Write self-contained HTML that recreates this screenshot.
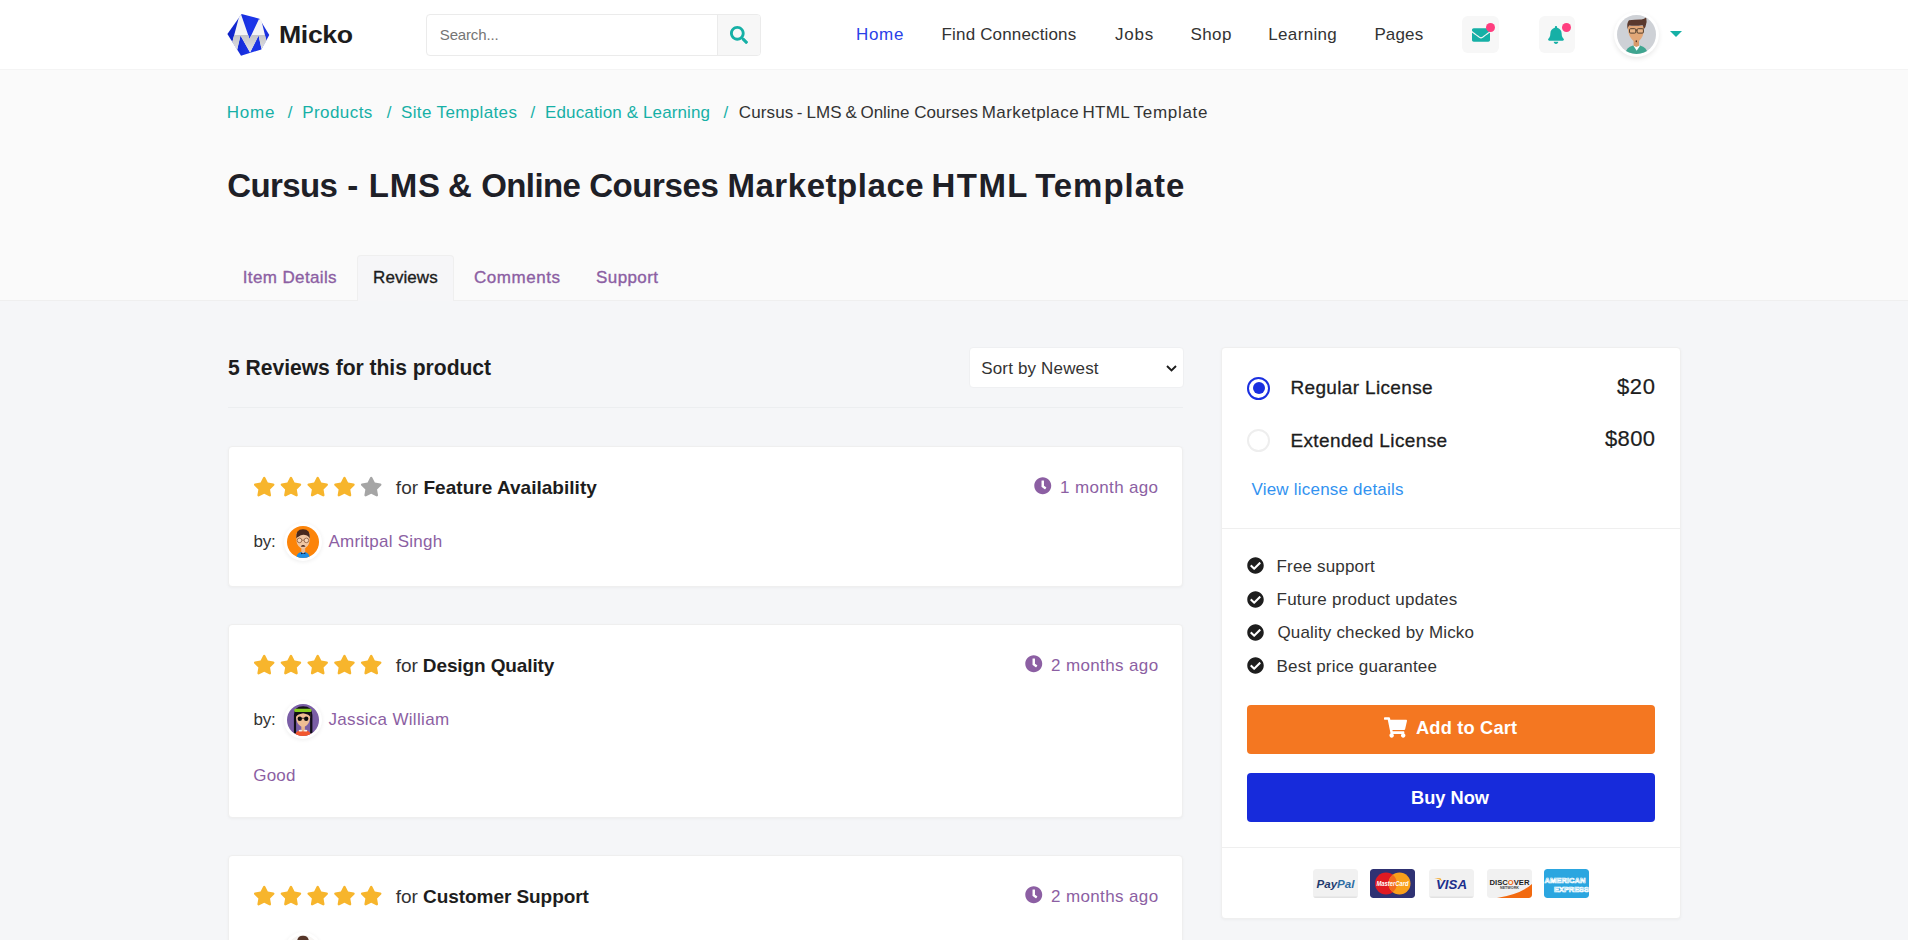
<!DOCTYPE html>
<html lang="en">
<head>
<meta charset="utf-8">
<title>Cursus - LMS &amp; Online Courses Marketplace HTML Template | Micko</title>
<style>
*{box-sizing:border-box;margin:0;padding:0}
html,body{width:1908px;height:940px;overflow:hidden}
body{position:relative;background:#f5f6f8;font-family:"Liberation Sans",Arial,sans-serif;color:#333;font-size:17px;line-height:20px}
a{text-decoration:none;color:inherit}
ul{list-style:none}
.abs,.t{position:absolute;white-space:nowrap}
.t{line-height:20px;height:20px}
svg{display:block}

/* ---------- header ---------- */
header{position:absolute;left:0;top:0;width:1908px;height:70px;background:#fff;border-bottom:1px solid #f4f4f4}
.logo{position:absolute;left:224px;top:10px;width:50px;height:50px}
.brand{left:280px;top:25px;font-size:23px;font-weight:700;color:#1d1d1d;transform:scaleX(1.16);transform-origin:0 50%}
.search{position:absolute;left:426px;top:14px;width:335px;height:42px;border:1px solid #ebebeb;border-radius:4px;background:#fff;overflow:hidden}
.search .ph{left:14px;top:10px;font-size:15px;color:#757575}
.search .btn{position:absolute;right:0;top:0;width:43px;height:40px;background:#f7f7f7;border-left:1px solid #ebebeb}
.search .btn svg{position:absolute;left:12px;top:11px}
nav .t{top:24px;font-size:17px;color:#333}
nav .t.active{color:#2a41e8}
.ibtn{position:absolute;top:16px;width:37px;height:37px;border-radius:6px;background:#f7f7f7}
.ibtn i{position:absolute;width:9px;height:9px;border-radius:50%;background:#ff3e7f}
.avatar{position:absolute;left:1614px;top:12px;width:45px;height:45px;border-radius:50%;background:#fff;box-shadow:0 2px 5px rgba(0,0,0,.09)}
.avatar svg{position:absolute;left:3px;top:3px}
.caret{position:absolute;left:1670px;top:31px;width:0;height:0;border-left:6px solid transparent;border-right:6px solid transparent;border-top:6px solid #16b0a6}

/* ---------- title band ---------- */
.band{position:absolute;left:0;top:70px;width:1908px;height:231px;background:#fafafa;border-bottom:1px solid #efefef}
.crumbs .t{top:102px;font-size:17px;color:#16b0a6}
.crumbs .t.sep{color:#16b0a6}
.crumbs .t.cur{color:#333}
h1{font-size:33px;font-weight:700;color:#1e2027}
h1 .t{left:228px;top:176px;font-size:33px}
.tabs .t{top:267px;font-size:17px;color:#8c5fa3;-webkit-text-stroke:.35px #8c5fa3}
.tabs .t.on{color:#1d1d1d;-webkit-text-stroke:.35px #1d1d1d}
.tabon{position:absolute;left:357px;top:255px;width:97px;height:46px;background:#f6f6f8;border:1px solid #efefef;border-bottom:0;border-radius:4px 4px 0 0}

/* ---------- reviews ---------- */
h2.t{left:228px;top:354px;height:28px;line-height:28px;font-size:22px;font-weight:700;color:#1d1d1d;transform:scaleX(.96);transform-origin:0 50%}
.select{position:absolute;left:969px;top:347px;width:215px;height:41px;background:#fff;border:1px solid #eff0f2;border-radius:4px}
.select .t{left:11px;top:9px;font-size:17px;color:#333}
.select svg{position:absolute;left:196px;top:17px}
.hr{position:absolute;left:228px;top:407px;width:955px;height:1px;background:#eceef0}
.card{position:absolute;left:228px;width:955px;background:#fff;border:1px solid #efefef;border-radius:4px;box-shadow:0 1px 3px rgba(0,0,0,.04)}
.stars{position:absolute;left:25px;top:29px;width:130px;height:22px}
.card .for{left:167px;top:29px;font-size:19px;color:#333}
.card .for b{color:#1d1d1d}
.card .time{top:29px;font-size:17px;color:#8c5fa3}
.card .clock{position:absolute;top:30px}
.card .by{left:25px;top:84px;font-size:17px;color:#333}
.card .av{position:absolute;left:55px;top:76px;width:38px;height:38px;border-radius:50%;background:#fff;box-shadow:0 1px 4px rgba(0,0,0,.07)}
.card .av svg{position:absolute;left:3px;top:3px}
.card .name{left:99px;top:84px;font-size:17px;color:#8c5fa3}
.card .body{left:25px;top:139px;font-size:17px;color:#8c5fa3}

/* ---------- sidebar ---------- */
aside{position:absolute;left:1221px;top:347px;width:460px;height:572px;background:#fff;border:1px solid #efefef;border-radius:4px;box-shadow:0 1px 3px rgba(0,0,0,.04)}
.radio{position:absolute;left:25px;width:23px;height:23px;border-radius:50%;background:#fff;border:2px solid #eee}
.radio.on{border-color:#1a2fe0}
.radio.on:after{content:"";position:absolute;left:3.5px;top:3.5px;width:12px;height:12px;border-radius:50%;background:#1a2fe0}
.lic{left:69px;font-size:19px;color:#1d1d1d;-webkit-text-stroke:.3px #1d1d1d}
.price{font-size:22px;color:#1d1d1d;-webkit-text-stroke:.2px #1d1d1d}
.vld{left:30px;top:131px;font-size:17px;color:#3292f0}
.line{position:absolute;left:0;width:458px;height:1px;background:#efefef}
.feat li{position:absolute;left:25px;height:20px}
.feat svg{position:absolute;left:0;top:1px}
.feat .t{left:31px;top:0;font-size:17px;color:#333}
.bt{position:absolute;left:25px;width:408px;height:49px;border-radius:4px;color:#fff}
.bt.cart{top:357px;background:#f47721}
.bt.buy{top:425px;background:#172bdb}
.bt .t{top:15px;font-size:19px;font-weight:700;color:#fff;transform:scaleX(.96);transform-origin:0 50%}
.bt svg{position:absolute;left:137px;top:12.300px}
.pay{position:absolute;top:521px;width:45px;height:29px;border-radius:3px;overflow:hidden}
</style>
<style>
#c-brand{left:278.55px;top:25.00px;letter-spacing:-0.327px}
#c-ph{left:12.80px;top:10.00px;letter-spacing:-0.152px}
#c-n1{left:855.92px;top:25.00px;letter-spacing:0.702px}
#c-n2{left:941.56px;top:25.00px;letter-spacing:0.157px}
#c-n3{left:1115.05px;top:25.00px;letter-spacing:0.782px}
#c-n4{left:1190.40px;top:25.00px;letter-spacing:0.419px}
#c-n5{left:1268.29px;top:25.00px;letter-spacing:0.332px}
#c-n6{left:1374.40px;top:25.00px;letter-spacing:0.133px}
#c-b1{left:226.66px;top:103.00px;letter-spacing:0.801px}
#c-s1{left:287.86px;top:103.00px;letter-spacing:0.000px}
#c-b2{left:302.26px;top:103.00px;letter-spacing:0.427px}
#c-s2{left:386.85px;top:103.00px;letter-spacing:0.000px}
#c-b3{left:401.02px;top:103.00px;letter-spacing:0.360px}
#c-s3{left:530.57px;top:103.00px;letter-spacing:0.000px}
#c-b4{left:545.06px;top:103.00px;letter-spacing:0.127px}
#c-s4{left:723.57px;top:103.00px;letter-spacing:0.000px}
#c-w1{left:227.35px;top:176.00px;letter-spacing:-0.644px}
#c-w2{left:347.26px;top:176.00px;letter-spacing:0.000px}
#c-w3{left:368.80px;top:176.00px;letter-spacing:0.839px}
#c-w4{left:447.93px;top:176.00px;letter-spacing:0.000px}
#c-w5{left:481.14px;top:176.00px;letter-spacing:-0.576px}
#c-w6{left:589.14px;top:176.00px;letter-spacing:-0.395px}
#c-w7{left:727.45px;top:176.00px;letter-spacing:0.544px}
#c-w8{left:931.54px;top:176.00px;letter-spacing:1.446px}
#c-w9{left:1035.14px;top:176.00px;letter-spacing:0.958px}
#c-t1{left:242.76px;top:268.00px;letter-spacing:0.373px}
#c-t2{left:373.06px;top:268.00px;letter-spacing:0.068px}
#c-t3{left:474.02px;top:268.00px;letter-spacing:0.539px}
#c-t4{left:596.05px;top:268.00px;letter-spacing:0.398px}
#c-h2{left:227.60px;top:354.00px;letter-spacing:-0.039px}
#c-sel{left:11.20px;top:11.00px;letter-spacing:0.165px}
#c-f1{left:166.87px;top:31.00px;letter-spacing:0.031px}
#c-f2{left:166.87px;top:31.00px;letter-spacing:-0.115px}
#c-f3{left:166.87px;top:31.00px;letter-spacing:-0.063px}
#c-tm1{left:831.07px;top:31.00px;letter-spacing:0.350px}
#c-tm2{left:821.99px;top:31.00px;letter-spacing:0.376px}
#c-tm3{left:821.99px;top:31.00px;letter-spacing:0.376px}
#c-by1{left:24.40px;top:85.00px;letter-spacing:-0.116px}
#c-by2{left:24.40px;top:85.00px;letter-spacing:-0.116px}
#c-by3{left:25.50px;top:85.00px;letter-spacing:0.000px}
#c-nm1{left:99.46px;top:85.00px;letter-spacing:0.243px}
#c-nm2{left:99.52px;top:85.00px;letter-spacing:0.312px}
#c-nm3{left:99.80px;top:85.00px;letter-spacing:0.000px}
#c-bd2{left:24.30px;top:141.00px;letter-spacing:0.162px}
#c-l1{left:68.46px;top:30.00px;letter-spacing:0.347px}
#c-l2{left:68.46px;top:83.00px;letter-spacing:0.373px}
#c-p1{left:394.90px;top:29.00px;letter-spacing:0.721px}
#c-p2{left:382.91px;top:81.00px;letter-spacing:0.410px}
#c-vld{left:29.48px;top:132.00px;letter-spacing:0.210px}
#c-ft1{left:29.56px;top:1.00px;letter-spacing:0.165px}
#c-ft2{left:29.56px;top:0.00px;letter-spacing:0.230px}
#c-ft3{left:30.46px;top:0.00px;letter-spacing:0.162px}
#c-ft4{left:29.56px;top:1.00px;letter-spacing:0.183px}
#c-cart{left:169.00px;top:13.00px;letter-spacing:0.186px}
#c-buy{left:164.20px;top:15.00px;letter-spacing:-0.000px}
#c-v1{left:738.87px;top:103.00px;letter-spacing:0.117px}
#c-v2{left:796.84px;top:103.00px;letter-spacing:0.000px}
#c-v3{left:806.41px;top:103.00px;letter-spacing:0.154px}
#c-v4{left:845.49px;top:103.00px;letter-spacing:0.000px}
#c-v5{left:860.50px;top:103.00px;letter-spacing:-0.030px}
#c-v6{left:914.13px;top:103.00px;letter-spacing:0.078px}
#c-v7{left:981.71px;top:103.00px;letter-spacing:0.429px}
#c-v8{left:1082.41px;top:103.00px;letter-spacing:0.314px}
#c-v9{left:1133.59px;top:103.00px;letter-spacing:0.695px}
</style>
</head>
<body>

<header>
  <a class="logo" href="#">
    <svg width="50" height="50" viewBox="0 0 940 940">
      <defs>
        <linearGradient id="lgb" x1="0" y1="0" x2="1" y2="0"><stop offset="0" stop-color="#0d20c4"/><stop offset=".55" stop-color="#1c36ea"/><stop offset="1" stop-color="#1a30dc"/></linearGradient>
        <linearGradient id="lgg" x1="0" y1="470" x2="0" y2="820" gradientUnits="userSpaceOnUse"><stop offset="0" stop-color="#c4c4c7"/><stop offset="1" stop-color="#e6e6e8"/></linearGradient>
        <clipPath id="cpl"><rect x="0" y="470" width="940" height="470"/></clipPath>
      </defs>
      <polygon points="330,74 666,164 851,470 701,741 320,862 64,450" fill="url(#lgb)"/>
      <polygon points="320,78 480,545 655,172 700,185 795,575 705,735 650,480 490,800 310,480 247,745 158,598 277,150" fill="#f4f4f6"/>
      <polygon clip-path="url(#cpl)" points="320,78 480,545 655,172 700,185 795,575 705,735 650,480 490,800 310,480 247,745 158,598 277,150" fill="url(#lgg)"/>
    </svg>
  </a>
  <a class="t brand" id="c-brand" href="#">Micko</a>

  <div class="search">
    <span class="t ph" id="c-ph">Search...</span>
    <span class="btn">
      <svg width="18" height="18" viewBox="0 0 512 512"><path fill="#16b0a6" d="M505 442.7L405.300 343c-4.500-4.500-10.600-7-17-7H372c27.600-35.300 44-79.700 44-128C416 93.100 322.900 0 208 0S0 93.100 0 208s93.100 208 208 208c48.300 0 92.700-16.400 128-44v16.300c0 6.400 2.500 12.500 7 17l99.700 99.700c9.400 9.400 24.600 9.400 33.900 0l28.300-28.300c9.400-9.400 9.400-24.600.1-34zM208 336c-70.700 0-128-57.200-128-128 0-70.700 57.200-128 128-128 70.700 0 128 57.200 128 128 0 70.700-57.200 128-128 128z"/></svg>
    </span>
  </div>

  <nav>
    <a class="t active" id="c-n1" href="#">Home</a>
    <a class="t" id="c-n2" href="#">Find Connections</a>
    <a class="t" id="c-n3" href="#">Jobs</a>
    <a class="t" id="c-n4" href="#">Shop</a>
    <a class="t" id="c-n5" href="#">Learning</a>
    <a class="t" id="c-n6" href="#">Pages</a>
  </nav>

  <a class="ibtn" style="left:1462px" href="#">
    <svg style="position:absolute;left:10px;top:10px" width="18" height="18" viewBox="0 0 512 512"><path fill="#16b0a6" d="M502.300 190.800c3.900-3.100 9.700-.2 9.700 4.700V400c0 26.500-21.500 48-48 48H48c-26.500 0-48-21.500-48-48V195.600c0-5 5.700-7.800 9.700-4.700 22.400 17.400 52.100 39.500 154.100 113.600 21.100 15.400 56.700 47.800 92.200 47.600 35.700.3 72-32.800 92.300-47.600 102-74.100 131.600-96.300 154-113.700zM256 320c23.200.4 56.600-29.200 73.400-41.400 132.700-96.300 142.800-104.700 173.400-128.700 5.800-4.500 9.200-11.500 9.200-18.900v-19c0-26.500-21.500-48-48-48H48C21.500 64 0 85.500 0 112v19c0 7.400 3.400 14.300 9.200 18.900 30.600 23.900 40.700 32.400 173.400 128.700 16.800 12.200 50.200 41.800 73.400 41.400z"/></svg>
    <i style="left:24px;top:6.500px"></i>
  </a>
  <a class="ibtn" style="left:1539px;width:36px" href="#">
    <svg style="position:absolute;left:9px;top:10px" width="16" height="18" viewBox="0 0 448 512"><path fill="#16b0a6" d="M224 512c35.320 0 63.970-28.650 63.970-64H160.030c0 35.350 28.650 64 63.970 64zm215.390-149.710c-19.320-20.760-55.470-51.990-55.470-154.290 0-77.700-54.480-139.900-127.940-155.160V32c0-17.670-14.320-32-31.980-32s-31.980 14.330-31.980 32v20.840C118.560 68.100 64.080 130.300 64.080 208c0 102.300-36.150 133.530-55.470 154.290-6 6.450-8.660 14.160-8.610 21.710.11 16.400 12.980 32 32.100 32h383.800c19.120 0 32-15.600 32.100-32 .05-7.550-2.610-15.270-8.610-21.710z"/></svg>
    <i style="left:22.5px;top:6.500px"></i>
  </a>
  <a class="avatar" href="#">
    <svg width="39" height="39" viewBox="0 0 39 39">
      <defs><clipPath id="cpa"><circle cx="19.500" cy="19.500" r="19.500"/></clipPath></defs>
      <g clip-path="url(#cpa)">
        <rect width="39" height="39" fill="#ced1d6"/>
        <path d="M8.500 39q.3-6.500 7.500-8.400h7q7.200 1.900 7.500 8.400z" fill="#3fa590"/>
        <path d="M16.300 30.600l3.400 5.200 3.500-5.200z" fill="#fff"/>
        <path d="M16.600 25h5.400v5.800l-2.600 1.300-2.800-1.300z" fill="#d99a6a"/>
        <path d="M10.900 11q-.2 8.500 3.300 12.500q3.200 3.800 5 3.800t5-3.800q3.200-4 2.800-12.500z" fill="#e2a777"/>
        <path d="M10.500 14.500q-.9-7 1.500-9.200q6.500-.9 12.500-.8q2.800-.4 4.700-2.300q1.300 5-.8 9.800l-1.800 2.400q.2-3-1-4.200q-7 1-13.500.3q-1.300 1.300-1.600 4z" fill="#5a392d"/>
        <rect x="12.500" y="13.700" width="6.300" height="4.400" rx="1.100" fill="#e9b487" stroke="#54402f" stroke-width="1"/>
        <rect x="20.100" y="13.700" width="6.300" height="4.400" rx="1.100" fill="#e9b487" stroke="#54402f" stroke-width="1"/>
        <path d="M18.800 15.200h1.300" stroke="#54402f" stroke-width="1"/>
        <ellipse cx="19.300" cy="26.200" rx=".7" ry="1" fill="#4a2d22"/>
      </g>
    </svg>
  </a>
  <span class="caret"></span>
</header>

<section class="band"></section>
<div class="crumbs">
  <a class="t" id="c-b1" href="#">Home</a>
  <span class="t sep" id="c-s1">/</span>
  <a class="t" id="c-b2" href="#">Products</a>
  <span class="t sep" id="c-s2">/</span>
  <a class="t" id="c-b3" href="#">Site Templates</a>
  <span class="t sep" id="c-s3">/</span>
  <a class="t" id="c-b4" href="#">Education &amp; Learning</a>
  <span class="t sep" id="c-s4">/</span>
  <span class="cur"><span class="t cur" id="c-v1">Cursus</span> <span class="t cur" id="c-v2">-</span> <span class="t cur" id="c-v3">LMS</span> <span class="t cur" id="c-v4">&amp;</span> <span class="t cur" id="c-v5">Online</span> <span class="t cur" id="c-v6">Courses</span> <span class="t cur" id="c-v7">Marketplace</span> <span class="t cur" id="c-v8">HTML</span> <span class="t cur" id="c-v9">Template</span></span>
</div>
<h1><span class="t" id="c-w1">Cursus</span> <span class="t" id="c-w2">-</span> <span class="t" id="c-w3">LMS</span> <span class="t" id="c-w4">&amp;</span> <span class="t" id="c-w5">Online</span> <span class="t" id="c-w6">Courses</span> <span class="t" id="c-w7">Marketplace</span> <span class="t" id="c-w8">HTML</span> <span class="t" id="c-w9">Template</span></h1>
<div class="tabs">
  <span class="tabon"></span>
  <a class="t" id="c-t1" href="#">Item Details</a>
  <a class="t on" id="c-t2" href="#">Reviews</a>
  <a class="t" id="c-t3" href="#">Comments</a>
  <a class="t" id="c-t4" href="#">Support</a>
</div>

<main>
  <h2 class="t" id="c-h2">5 Reviews for this product</h2>
  <div class="select">
    <span class="t" id="c-sel">Sort by Newest</span>
    <svg width="11" height="7" viewBox="0 0 11 7"><path d="M1 1l4.500 4.500L10 1" fill="none" stroke="#1d1d1d" stroke-width="1.900"/></svg>
  </div>
  <div class="hr"></div>

  <article class="card" style="top:446px;height:141px">
    <svg class="stars" width="130" height="22" viewBox="0 0 130 22"><path transform="translate(-0.85 0.8) scale(0.0384)" fill="#f7b52c" d="M259.3 17.8L194 150.2 47.9 171.5c-26.200 3.800-36.700 36.100-17.700 54.600l105.700 103-25 145.500c-4.500 26.300 23.200 46 46.400 33.700L288 439.600l130.700 68.700c23.200 12.200 50.900-7.400 46.400-33.700l-25-145.500 105.700-103c19-18.500 8.500-50.800-17.700-54.600L382 150.200 316.700 17.800c-11.700-23.600-45.600-23.900-57.400 0z"/><path transform="translate(25.90 0.8) scale(0.0384)" fill="#f7b52c" d="M259.3 17.8L194 150.2 47.9 171.5c-26.200 3.800-36.700 36.100-17.700 54.600l105.700 103-25 145.500c-4.500 26.300 23.200 46 46.400 33.700L288 439.600l130.700 68.700c23.200 12.200 50.900-7.400 46.400-33.700l-25-145.500 105.700-103c19-18.500 8.500-50.800-17.700-54.600L382 150.200 316.700 17.800c-11.700-23.600-45.600-23.900-57.400 0z"/><path transform="translate(52.65 0.8) scale(0.0384)" fill="#f7b52c" d="M259.3 17.8L194 150.2 47.9 171.5c-26.200 3.800-36.700 36.100-17.700 54.600l105.700 103-25 145.500c-4.500 26.300 23.200 46 46.400 33.700L288 439.600l130.700 68.700c23.200 12.200 50.900-7.400 46.400-33.700l-25-145.500 105.700-103c19-18.500 8.500-50.800-17.700-54.600L382 150.200 316.700 17.800c-11.700-23.600-45.600-23.900-57.400 0z"/><path transform="translate(79.40 0.8) scale(0.0384)" fill="#f7b52c" d="M259.3 17.8L194 150.2 47.9 171.5c-26.200 3.800-36.700 36.100-17.700 54.600l105.700 103-25 145.500c-4.500 26.300 23.200 46 46.400 33.700L288 439.600l130.700 68.700c23.200 12.200 50.900-7.400 46.400-33.700l-25-145.500 105.700-103c19-18.500 8.500-50.800-17.700-54.600L382 150.200 316.700 17.800c-11.700-23.600-45.600-23.900-57.400 0z"/><path transform="translate(106.15 0.8) scale(0.0384)" fill="#a5a5a5" d="M259.3 17.8L194 150.2 47.9 171.5c-26.200 3.800-36.700 36.100-17.700 54.600l105.700 103-25 145.500c-4.500 26.300 23.200 46 46.400 33.700L288 439.600l130.700 68.700c23.200 12.200 50.900-7.400 46.400-33.700l-25-145.500 105.700-103c19-18.500 8.500-50.800-17.700-54.600L382 150.200 316.700 17.800c-11.700-23.600-45.600-23.900-57.400 0z"/></svg>
    <span class="t for" id="c-f1">for <b>Feature Availability</b></span>
    <svg class="clock" style="left:805px" width="17.500" height="17.500" viewBox="0 0 512 512"><path fill="#8c5fa3" d="M256 8C119 8 8 119 8 256s111 248 248 248 248-111 248-248S393 8 256 8zm57.100 350.100L224.900 294c-3.100-2.300-4.900-5.900-4.900-9.700V116c0-6.600 5.400-12 12-12h48c6.600 0 12 5.400 12 12v137.700l63.500 46.200c5.400 3.900 6.500 11.400 2.600 16.800l-28.200 38.800c-3.900 5.300-11.400 6.500-16.800 2.600z"/></svg>
    <span class="t time" id="c-tm1">1 month ago</span>
    <span class="t by" id="c-by1">by:</span>
    <a class="av" href="#"><svg width="32" height="32" viewBox="0 0 32 32"><defs><clipPath id="cp1"><circle cx="16" cy="16" r="16"/></clipPath></defs><g clip-path="url(#cp1)"><rect width="32" height="32" fill="#fc8409"/><path d="M9.400 32q.2-5.400 4.800-6.100h3.600q4.600.7 4.800 6.100z" fill="#1f8fe6"/><path d="M14.300 21h3.900v5.200l-1.900 1-2-1z" fill="#e8b995"/><path d="M9.400 7v5q-.1 5.500 2 8q2.300 2.700 4.600 2.700t4.600-2.700q2.100-2.500 2-8V7z" fill="#efc6a3"/><path d="M9.200 12.500q-.9-9.300 6.800-9.300t6.800 9.300q-1-2.400-2.800-3.100q-5-2-8.600 1.300q-1.600.5-2.200 1.800z" fill="#48291f"/><circle cx="12.500" cy="14.400" r="2.300" fill="#f6d6bb" stroke="#86573a" stroke-width=".8"/><circle cx="19.400" cy="14.400" r="2.300" fill="#f6d6bb" stroke="#86573a" stroke-width=".8"/><path d="M14.800 14.200h2.300" stroke="#86573a" stroke-width=".7"/><path d="M13.700 20.400q2.400-2.600 4.800 0q-2.400.7-4.800 0z" fill="#4a2a20"/><path d="M14 26.400l2.200.9 2.100-.9v1.900l-2.100-.7-2.200.7z" fill="#17213f"/></g></svg></a>
    <a class="t name" id="c-nm1" href="#">Amritpal Singh</a>
  </article>
  <article class="card" style="top:624px;height:194px">
    <svg class="stars" width="130" height="22" viewBox="0 0 130 22"><path transform="translate(-0.85 0.8) scale(0.0384)" fill="#f7b52c" d="M259.3 17.8L194 150.2 47.9 171.5c-26.200 3.800-36.700 36.100-17.700 54.600l105.700 103-25 145.500c-4.500 26.300 23.200 46 46.400 33.700L288 439.600l130.700 68.700c23.200 12.200 50.900-7.400 46.400-33.700l-25-145.500 105.700-103c19-18.500 8.500-50.800-17.700-54.600L382 150.200 316.700 17.800c-11.700-23.600-45.600-23.900-57.400 0z"/><path transform="translate(25.90 0.8) scale(0.0384)" fill="#f7b52c" d="M259.3 17.8L194 150.2 47.9 171.5c-26.200 3.800-36.700 36.100-17.700 54.600l105.700 103-25 145.500c-4.500 26.300 23.200 46 46.400 33.700L288 439.600l130.700 68.700c23.200 12.200 50.900-7.400 46.400-33.700l-25-145.500 105.700-103c19-18.500 8.500-50.800-17.700-54.600L382 150.200 316.700 17.800c-11.700-23.600-45.600-23.900-57.400 0z"/><path transform="translate(52.65 0.8) scale(0.0384)" fill="#f7b52c" d="M259.3 17.8L194 150.2 47.9 171.5c-26.200 3.800-36.700 36.100-17.700 54.600l105.700 103-25 145.500c-4.500 26.300 23.200 46 46.400 33.700L288 439.600l130.700 68.700c23.200 12.200 50.900-7.400 46.400-33.700l-25-145.500 105.700-103c19-18.500 8.500-50.800-17.700-54.600L382 150.200 316.700 17.800c-11.700-23.600-45.600-23.900-57.400 0z"/><path transform="translate(79.40 0.8) scale(0.0384)" fill="#f7b52c" d="M259.3 17.8L194 150.2 47.9 171.5c-26.200 3.800-36.700 36.100-17.700 54.600l105.700 103-25 145.500c-4.500 26.300 23.200 46 46.400 33.700L288 439.600l130.700 68.700c23.200 12.200 50.900-7.400 46.400-33.700l-25-145.500 105.700-103c19-18.500 8.500-50.800-17.700-54.600L382 150.200 316.700 17.800c-11.700-23.600-45.600-23.900-57.400 0z"/><path transform="translate(106.15 0.8) scale(0.0384)" fill="#f7b52c" d="M259.3 17.8L194 150.2 47.9 171.5c-26.200 3.800-36.700 36.100-17.700 54.600l105.700 103-25 145.500c-4.500 26.300 23.200 46 46.400 33.700L288 439.600l130.700 68.700c23.200 12.200 50.900-7.400 46.400-33.700l-25-145.500 105.700-103c19-18.500 8.500-50.800-17.700-54.600L382 150.200 316.700 17.800c-11.700-23.600-45.600-23.900-57.400 0z"/></svg>
    <span class="t for" id="c-f2">for <b>Design Quality</b></span>
    <svg class="clock" style="left:796px" width="17.500" height="17.500" viewBox="0 0 512 512"><path fill="#8c5fa3" d="M256 8C119 8 8 119 8 256s111 248 248 248 248-111 248-248S393 8 256 8zm57.100 350.100L224.900 294c-3.100-2.300-4.900-5.900-4.900-9.700V116c0-6.600 5.400-12 12-12h48c6.600 0 12 5.400 12 12v137.700l63.500 46.200c5.400 3.900 6.500 11.400 2.600 16.800l-28.200 38.800c-3.900 5.300-11.400 6.500-16.800 2.600z"/></svg>
    <span class="t time" id="c-tm2">2 months ago</span>
    <span class="t by" id="c-by2">by:</span>
    <a class="av" href="#"><svg width="32" height="32" viewBox="0 0 32 32"><defs><clipPath id="cp2"><circle cx="16" cy="16" r="16"/></clipPath></defs><g clip-path="url(#cp2)"><rect width="32" height="32" fill="#7a5ea6"/><path d="M6.900 29.500V11q0-8.800 9.200-8.800t9.300 8.800v18.500h-2.300V12H9.100v17.500z" fill="#120f18"/><path d="M8 32q.2-4.800 5.200-5.500h5.600q5 .7 5.200 5.500z" fill="#f2572e"/><path d="M14.300 21h3.600v5.600l-1.800 1.200-1.800-1.200z" fill="#eab48d"/><path d="M9 9q-.4 7.500 2.200 11q2.600 3.300 4.900 3.300t4.900-3.300q2.600-3.500 2.200-11z" fill="#efbd94"/><path d="M8.800 13.500V8h14.600v5.500q-.8-3.300-7.300-4.300q-6.500 1-7.300 4.300z" fill="#120f18"/><rect x="7.300" y="4.800" width="17.200" height="3.100" rx="1.200" fill="#86cc1e"/><circle cx="12.800" cy="14.700" r="2.200" fill="#0d0d10"/><circle cx="19.200" cy="14.700" r="2.200" fill="#0d0d10"/><path d="M14.800 14.300h2.400" stroke="#0d0d10" stroke-width=".7"/><ellipse cx="13.400" cy="26.700" rx="1.700" ry=".9" fill="#f3efe9"/><ellipse cx="18.600" cy="26.700" rx="1.700" ry=".9" fill="#f3efe9"/></g></svg></a>
    <a class="t name" id="c-nm2" href="#">Jassica William</a>
    <p class="t body" id="c-bd2">Good</p>
  </article>
  <article class="card" style="top:855px;height:140px">
    <svg class="stars" width="130" height="22" viewBox="0 0 130 22"><path transform="translate(-0.85 0.8) scale(0.0384)" fill="#f7b52c" d="M259.3 17.8L194 150.2 47.9 171.5c-26.200 3.800-36.700 36.100-17.700 54.600l105.700 103-25 145.500c-4.500 26.300 23.200 46 46.400 33.700L288 439.600l130.700 68.700c23.200 12.200 50.900-7.400 46.400-33.700l-25-145.500 105.700-103c19-18.500 8.500-50.800-17.700-54.600L382 150.200 316.700 17.800c-11.700-23.600-45.600-23.900-57.400 0z"/><path transform="translate(25.90 0.8) scale(0.0384)" fill="#f7b52c" d="M259.3 17.8L194 150.2 47.9 171.5c-26.200 3.800-36.700 36.100-17.700 54.600l105.700 103-25 145.500c-4.500 26.300 23.200 46 46.400 33.700L288 439.600l130.700 68.700c23.200 12.200 50.900-7.400 46.400-33.700l-25-145.500 105.700-103c19-18.500 8.500-50.800-17.700-54.600L382 150.200 316.700 17.800c-11.700-23.600-45.600-23.900-57.400 0z"/><path transform="translate(52.65 0.8) scale(0.0384)" fill="#f7b52c" d="M259.3 17.8L194 150.2 47.9 171.5c-26.200 3.800-36.700 36.100-17.700 54.600l105.700 103-25 145.500c-4.500 26.300 23.200 46 46.400 33.700L288 439.600l130.700 68.700c23.200 12.200 50.900-7.400 46.400-33.700l-25-145.500 105.700-103c19-18.500 8.500-50.800-17.700-54.600L382 150.200 316.700 17.800c-11.700-23.600-45.600-23.900-57.400 0z"/><path transform="translate(79.40 0.8) scale(0.0384)" fill="#f7b52c" d="M259.3 17.8L194 150.2 47.9 171.5c-26.200 3.800-36.700 36.100-17.700 54.600l105.700 103-25 145.500c-4.500 26.300 23.200 46 46.400 33.700L288 439.600l130.700 68.700c23.200 12.200 50.900-7.400 46.400-33.700l-25-145.500 105.700-103c19-18.500 8.500-50.800-17.700-54.600L382 150.200 316.700 17.800c-11.700-23.600-45.600-23.900-57.400 0z"/><path transform="translate(106.15 0.8) scale(0.0384)" fill="#f7b52c" d="M259.3 17.8L194 150.2 47.9 171.5c-26.200 3.800-36.700 36.100-17.700 54.600l105.700 103-25 145.500c-4.500 26.300 23.200 46 46.400 33.700L288 439.600l130.700 68.700c23.200 12.200 50.900-7.400 46.400-33.700l-25-145.500 105.700-103c19-18.500 8.500-50.800-17.700-54.600L382 150.200 316.700 17.800c-11.700-23.600-45.600-23.900-57.400 0z"/></svg>
    <span class="t for" id="c-f3">for <b>Customer Support</b></span>
    <svg class="clock" style="left:796px" width="17.500" height="17.500" viewBox="0 0 512 512"><path fill="#8c5fa3" d="M256 8C119 8 8 119 8 256s111 248 248 248 248-111 248-248S393 8 256 8zm57.100 350.100L224.900 294c-3.100-2.300-4.900-5.900-4.900-9.700V116c0-6.600 5.400-12 12-12h48c6.600 0 12 5.400 12 12v137.700l63.500 46.200c5.400 3.900 6.500 11.400 2.600 16.800l-28.200 38.800c-3.900 5.300-11.400 6.500-16.800 2.600z"/></svg>
    <span class="t time" id="c-tm3">2 months ago</span>
    <span class="t by" id="c-by3">by:</span>
    <a class="av" href="#"><svg width="32" height="32" viewBox="0 0 32 32"><defs><clipPath id="cp3"><circle cx="16" cy="16" r="16"/></clipPath></defs><g clip-path="url(#cp3)"><rect width="32" height="32" fill="#f7f5f3"/><path d="M10 13q-1.500-12.600 6-12.200q7.500-.4 6 12.200z" fill="#553628"/><ellipse cx="16" cy="16" rx="5.600" ry="7" fill="#e3ad86"/><path d="M7 32q0-5 5.500-5.500h7q5.500.5 5.500 5.500z" fill="#3b6fb5"/></g></svg></a>
    <a class="t name" id="c-nm3" href="#">Johnson Smith</a>
  </article>

</main>

<aside>
  <span class="radio on" style="top:28.500px"></span>
  <span class="t lic" id="c-l1">Regular License</span>
  <span class="t price" id="c-p1">$20</span>
  <span class="radio" style="top:80.500px"></span>
  <span class="t lic" id="c-l2">Extended License</span>
  <span class="t price" id="c-p2">$800</span>
  <a class="t vld" id="c-vld" href="#">View license details</a>
  <div class="line" style="top:180px"></div>
  <ul class="feat">
    <li style="top:208px"><svg width="17" height="17" viewBox="0 0 512 512"><path fill="#1d1d1d" d="M504 256c0 136.967-111.033 248-248 248S8 392.967 8 256 119.033 8 256 8s248 111.033 248 248zM227.314 387.314l184-184c6.248-6.248 6.248-16.379 0-22.627l-22.627-22.627c-6.248-6.249-16.379-6.249-22.628 0L216 308.118l-70.059-70.059c-6.248-6.248-16.379-6.248-22.628 0l-22.627 22.627c-6.248 6.248-6.248 16.379 0 22.627l104 104c6.249 6.249 16.379 6.249 22.628.001z"/></svg><span class="t" id="c-ft1">Free support</span></li>
    <li style="top:242px"><svg width="17" height="17" viewBox="0 0 512 512"><path fill="#1d1d1d" d="M504 256c0 136.967-111.033 248-248 248S8 392.967 8 256 119.033 8 256 8s248 111.033 248 248zM227.314 387.314l184-184c6.248-6.248 6.248-16.379 0-22.627l-22.627-22.627c-6.248-6.249-16.379-6.249-22.628 0L216 308.118l-70.059-70.059c-6.248-6.248-16.379-6.248-22.628 0l-22.627 22.627c-6.248 6.248-6.248 16.379 0 22.627l104 104c6.249 6.249 16.379 6.249 22.628.001z"/></svg><span class="t" id="c-ft2">Future product updates</span></li>
    <li style="top:275px"><svg width="17" height="17" viewBox="0 0 512 512"><path fill="#1d1d1d" d="M504 256c0 136.967-111.033 248-248 248S8 392.967 8 256 119.033 8 256 8s248 111.033 248 248zM227.314 387.314l184-184c6.248-6.248 6.248-16.379 0-22.627l-22.627-22.627c-6.248-6.249-16.379-6.249-22.628 0L216 308.118l-70.059-70.059c-6.248-6.248-16.379-6.248-22.628 0l-22.627 22.627c-6.248 6.248-6.248 16.379 0 22.627l104 104c6.249 6.249 16.379 6.249 22.628.001z"/></svg><span class="t" id="c-ft3">Quality checked by Micko</span></li>
    <li style="top:308px"><svg width="17" height="17" viewBox="0 0 512 512"><path fill="#1d1d1d" d="M504 256c0 136.967-111.033 248-248 248S8 392.967 8 256 119.033 8 256 8s248 111.033 248 248zM227.314 387.314l184-184c6.248-6.248 6.248-16.379 0-22.627l-22.627-22.627c-6.248-6.249-16.379-6.249-22.628 0L216 308.118l-70.059-70.059c-6.248-6.248-16.379-6.248-22.628 0l-22.627 22.627c-6.248 6.248-6.248 16.379 0 22.627l104 104c6.249 6.249 16.379 6.249 22.628.001z"/></svg><span class="t" id="c-ft4">Best price guarantee</span></li>
  </ul>
  <a class="bt cart" href="#"><svg width="23" height="21" viewBox="0 0 576 512"><path fill="#fff" d="M528.12 301.319l47.273-208C578.806 78.301 567.391 64 551.990 64H159.208l-9.166-44.810C147.758 8.021 137.930 0 126.529 0H24C10.745 0 0 10.745 0 24v16c0 13.255 10.745 24 24 24h69.883l70.248 343.435C147.325 417.100 136 435.222 136 456c0 30.928 25.072 56 56 56s56-25.072 56-56c0-15.674-6.447-29.835-16.824-40h209.647C430.447 426.165 424 440.326 424 456c0 30.928 25.072 56 56 56s56-25.072 56-56c0-22.172-12.888-41.332-31.579-50.405l5.517-24.276c3.413-15.018-8.002-29.319-23.403-29.319H218.117l-6.545-32h293.145c11.206 0 20.920-7.754 23.403-18.681z"/></svg><span class="t" id="c-cart">Add to Cart</span></a>
  <a class="bt buy" href="#"><span class="t" id="c-buy">Buy Now</span></a>
  <div class="line" style="top:499px"></div>
  <span class="pay" style="left:91px"><svg width="45" height="29" viewBox="0 0 45 29"><rect width="45" height="29" rx="3" fill="#f1f1f1"/><rect y="27.500" width="45" height="1.500" fill="#e2e2e2"/><text x="3.500" y="18.500" font-family="Liberation Sans, Arial, sans-serif" font-size="10.500" font-weight="700" font-style="italic" fill="#1f3a6e" textLength="38" lengthAdjust="spacingAndGlyphs">Pay<tspan fill="#2d6da3">Pal</tspan></text></svg></span>
  <span class="pay" style="left:148px"><svg width="45" height="29" viewBox="0 0 45 29"><rect width="45" height="29" rx="3" fill="#2f3273"/><circle cx="16" cy="14.500" r="11" fill="#e01a22"/><circle cx="29.500" cy="14.500" r="11" fill="#f9a01b"/><path d="M22.750 5.800a11 11 0 0 1 0 17.400a11 11 0 0 1 0-17.400z" fill="#f26a1f"/><text x="6.500" y="17" font-family="Liberation Sans, Arial, sans-serif" font-size="6.600" font-weight="700" font-style="italic" fill="#fff" textLength="32" lengthAdjust="spacingAndGlyphs">MasterCard</text></svg></span>
  <span class="pay" style="left:207px"><svg width="45" height="29" viewBox="0 0 45 29"><rect width="45" height="29" rx="3" fill="#f1f1f1"/><rect y="27.500" width="45" height="1.500" fill="#e2e2e2"/><path d="M5.200 9.300h6.200l1.800 3q-2.500-2.300-8-3z" fill="#f4a623"/><text x="7" y="19.500" font-family="Liberation Sans, Arial, sans-serif" font-size="13" font-weight="700" font-style="italic" fill="#1c2f8c" textLength="31" lengthAdjust="spacingAndGlyphs">VISA</text></svg></span>
  <span class="pay" style="left:265px"><svg width="45" height="29" viewBox="0 0 45 29"><rect width="45" height="29" rx="3" fill="#f1f1f1"/><path d="M10 29Q34 25 45 15V26q0 3-3 3z" fill="#f26a10"/><text x="2.500" y="15.500" font-family="Liberation Sans, Arial, sans-serif" font-size="7.600" font-weight="700" fill="#1d1d1d" textLength="40" lengthAdjust="spacingAndGlyphs">DISC<tspan fill="#f26a10">O</tspan>VER</text><text x="13" y="19.800" font-family="Liberation Sans, Arial, sans-serif" font-size="2.600" font-weight="700" fill="#444" textLength="19" lengthAdjust="spacingAndGlyphs">NETWORK</text></svg></span>
  <span class="pay" style="left:322px"><svg width="45" height="29" viewBox="0 0 45 29"><rect width="45" height="29" rx="3" fill="#2ba6e0"/><text x="0.500" y="13.500" font-family="Liberation Sans, Arial, sans-serif" font-size="7.200" font-weight="700" fill="#2ba6e0" stroke="#fff" stroke-width=".7" textLength="41" lengthAdjust="spacingAndGlyphs">AMERICAN</text><text x="10" y="22.500" font-family="Liberation Sans, Arial, sans-serif" font-size="7.200" font-weight="700" fill="#2ba6e0" stroke="#fff" stroke-width=".7" textLength="35" lengthAdjust="spacingAndGlyphs">EXPRESS</text></svg></span>

</aside>

</body>
</html>
